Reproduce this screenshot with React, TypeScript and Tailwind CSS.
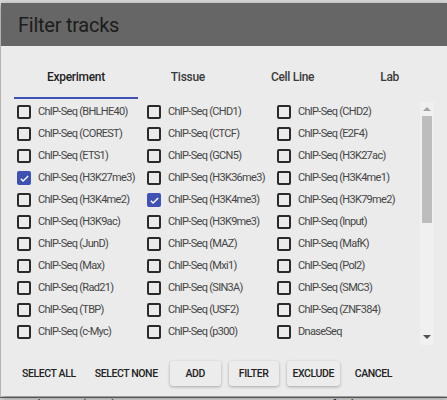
import React from 'react';

const tracks: string[] = [
  'ChIP-Seq (BHLHE40)', 'ChIP-Seq (CHD1)', 'ChIP-Seq (CHD2)',
  'ChIP-Seq (COREST)', 'ChIP-Seq (CTCF)', 'ChIP-Seq (E2F4)',
  'ChIP-Seq (ETS1)', 'ChIP-Seq (GCN5)', 'ChIP-Seq (H3K27ac)',
  'ChIP-Seq (H3K27me3)', 'ChIP-Seq (H3K36me3)', 'ChIP-Seq (H3K4me1)',
  'ChIP-Seq (H3K4me2)', 'ChIP-Seq (H3K4me3)', 'ChIP-Seq (H3K79me2)',
  'ChIP-Seq (H3K9ac)', 'ChIP-Seq (H3K9me3)', 'ChIP-Seq (Input)',
  'ChIP-Seq (JunD)', 'ChIP-Seq (MAZ)', 'ChIP-Seq (MafK)',
  'ChIP-Seq (Max)', 'ChIP-Seq (Mxi1)', 'ChIP-Seq (Pol2)',
  'ChIP-Seq (Rad21)', 'ChIP-Seq (SIN3A)', 'ChIP-Seq (SMC3)',
  'ChIP-Seq (TBP)', 'ChIP-Seq (USF2)', 'ChIP-Seq (ZNF384)',
  'ChIP-Seq (c-Myc)', 'ChIP-Seq (p300)', 'DnaseSeq',
];

const initiallyChecked = ['ChIP-Seq (H3K27me3)', 'ChIP-Seq (H3K4me3)'];

const tabs = ['Experiment', 'Tissue', 'Cell Line', 'Lab'];

const Checkbox: React.FC<{ checked: boolean }> = ({ checked }) =>
  checked ? (
    <span className="flex h-[14px] w-[14px] shrink-0 items-center justify-center rounded-[2px] bg-[#3f51b5]">
      <svg width="11" height="11" viewBox="0 0 24 24">
        <path d="M4 12.5l5 5L20 6.5" fill="none" stroke="white" strokeWidth="3" />
      </svg>
    </span>
  ) : (
    <span className="h-[14px] w-[14px] shrink-0 rounded-[2px] border-2 border-[#2b2b2b]" />
  );

export default function App() {
  const [checked, setChecked] = React.useState<string[]>(initiallyChecked);
  const toggle = (t: string) =>
    setChecked((c) => (c.includes(t) ? c.filter((x) => x !== t) : [...c, t]));

  const flat = 'h-[25px] px-[9px] uppercase tracking-[-0.4px]';
  const raised =
    'h-[25px] rounded-[3px] bg-[#ececec] uppercase tracking-[-0.4px] shadow-[0_1px_3px_rgba(0,0,0,0.3)]';

  return (
    <div className="h-[400px] w-[447px] overflow-hidden bg-[#d9d9d9] pt-[3px] font-['Roboto',sans-serif]">
      <div className="ml-[1px] flex h-[393px] flex-col bg-[#ebebeb] shadow-[0_2px_6px_rgba(0,0,0,0.4)]">
        {/* Title */}
        <div className="flex h-[43px] shrink-0 items-center bg-[#666666] pl-[17px]">
          <h2 className="text-[20px] leading-none tracking-[-0.25px] text-[#1c1c1c]">Filter tracks</h2>
        </div>

        {/* Tabs */}
        <div className="flex h-[53px] shrink-0 items-end pl-[13px]">
          {tabs.map((t, i) => (
            <div
              key={t}
              className={`flex h-[40px] items-center whitespace-nowrap border-b-2 px-[33px] pb-[2px] text-[12px] font-medium tracking-[-0.3px] ${
                i === 0 ? 'border-[#3f51b5] text-[#1f1f1f]' : 'border-transparent text-[#3a3a3a]'
              }`}
            >
              {t}
            </div>
          ))}
        </div>

        {/* Track list */}
        <div className="flex h-[252px] shrink-0 pt-[2px]">
          <div className="grid flex-1 grid-cols-[130px_130px_130px] content-start overflow-hidden pl-[16px]">
            {tracks.map((t) => (
              <label
                key={t}
                onClick={() => toggle(t)}
                className="flex h-[22px] cursor-pointer items-center gap-[7px] whitespace-nowrap text-[11px] tracking-[-0.7px] text-[#454545]"
              >
                <Checkbox checked={checked.includes(t)} />
                {t}
              </label>
            ))}
          </div>
          <div className="mr-[13px] mt-[1px] flex h-[243px] w-[14px] flex-col items-center bg-[#f0f0f0]">
            <div className="flex h-[14px] items-center justify-center">
              <span className="h-0 w-0 border-x-[4px] border-b-[4px] border-x-transparent border-b-[#a3a3a3]" />
            </div>
            <div className="h-[107px] w-[10px] bg-[#bdbdbd]" />
            <div className="flex-1" />
            <div className="flex h-[14px] items-center justify-center pb-[2px]">
              <span className="h-0 w-0 border-x-[4px] border-t-[4px] border-x-transparent border-t-[#505050]" />
            </div>
          </div>
        </div>

        {/* Actions */}
        <div className="flex flex-1 items-center pl-[12px] text-[10.5px] font-medium text-[#222]">
          <button className={flat}>Select all</button>
          <button className={`ml-[1px] ${flat}`}>Select none</button>
          <button className={`ml-[3px] w-[51px] ${raised}`}>Add</button>
          <button className={`ml-[8px] w-[50px] ${raised}`}>Filter</button>
          <button className={`ml-[8px] w-[53px] ${raised}`}>Exclude</button>
          <button className={`ml-[6px] ${flat}`}>Cancel</button>
        </div>
      </div>

      {/* Page behind the dialog */}
      <div className="mt-[1px] flex gap-[36px] border-t border-[#555] pl-[30px] text-[12px] leading-[14px] text-[#222]">
        <span>ChIP-Seq (MAZ)</span>
        <span>CH12</span>
        <span className="ml-[90px]">Stanford</span>
      </div>
    </div>
  );
}
